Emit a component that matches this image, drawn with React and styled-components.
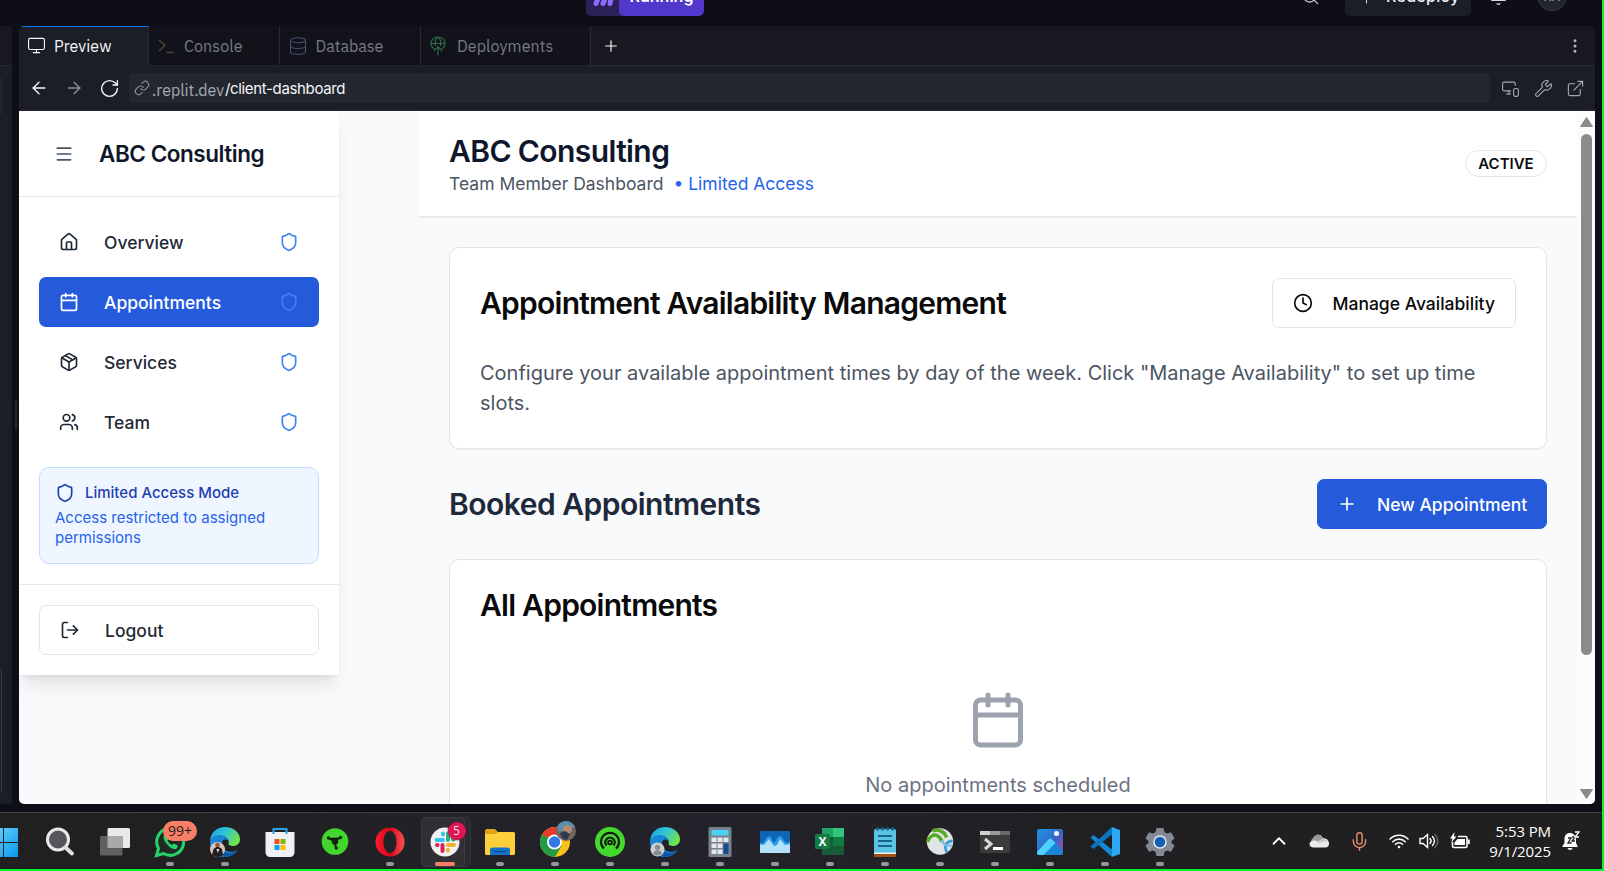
import React from "react";
import styled, { createGlobalStyle, css } from "styled-components";
import {
  Monitor, Database, Plus, EllipsisVertical, ArrowLeft, ArrowRight, RotateCw, MonitorSmartphone,
  Wrench, ExternalLink, Menu, House, Calendar, Package, Users, Shield, LogOut, Clock, Search, Bell,
  ChevronUp, Mic,
} from "lucide-react";

const GlobalStyle = createGlobalStyle`
  *, *::before, *::after { box-sizing: border-box; }
  body { margin: 0; background: #0e0e16; overflow: hidden; }
  h1, h2, h3, p { margin: 0; }
  button { font: inherit; margin: 0; }
  svg { display: block; flex: none; }
`;

const Screen = styled.div`
  width: 1604px;
  height: 871px;
  display: flex;
  flex-direction: column;
  overflow: hidden;
  background: #0e0e16;
  border-right: 2px solid #00f52e;
  border-bottom: 2px solid #00f52e;
  font-family: Inter, "Liberation Sans", sans-serif;
`;

/* ---------- workspace top bar ---------- */
const TopBar = styled.header`
  height: 26px;
  flex: none;
  overflow: hidden;
  display: flex;
  justify-content: space-between;
  padding: 0 35px 0 586px;
`;
const TopGroup = styled.div`
  display: flex;
  align-items: center;
  height: 32px;
  margin-top: -16px;
`;
const RunPill = styled.div`
  display: flex;
  height: 32px;
  border-radius: 5px;
  overflow: hidden;
  background: #2b2158;
`;
const RunMark = styled.div`
  width: 33px;
  display: flex;
  align-items: center;
  justify-content: center;
`;
const RunLabel = styled.div`
  width: 85px;
  background: #5137cb;
  border-radius: 5px;
  color: #fff;
  font: 600 16px/25px Inter, sans-serif;
  text-align: center;
`;
const Redeploy = styled.div`
  display: flex;
  gap: 10px;
  width: 126px;
  height: 32px;
  padding: 0 12px;
  margin: 0 18px 0 25px;
  border-radius: 5px;
  background: #1b1e26;
  color: #f2f3f5;
  font: 500 16px/25px Inter, sans-serif;
  letter-spacing: 0.3px;
  svg { margin-top: 4px; }
`;
const TopIcon = styled.span`
  margin-top: -8px;
  color: #d5d7dc;
`;
const Avatar = styled.div`
  width: 30px;
  height: 30px;
  margin: -8px 0 0 29px;
  border-radius: 50%;
  border: 1px solid #3b3f4b;
  background: #22252e;
  color: #8a8f9c;
  font: 500 12px/30px Inter, sans-serif;
  text-align: center;
`;

/* ---------- panes ---------- */
const Workspace = styled.div`
  display: flex;
  height: 778px;
  flex: none;
`;
const SidePane = styled.aside`
  width: 12px;
  display: flex;
  flex-direction: column;
  background: #1b1e26;
  border-radius: 0 4px 4px 0;
  overflow: hidden;
`;
const SidePaneTabs = styled.div`
  height: 40px;
  background: #181820;
  border-bottom: 1px solid #262932;
`;
const SidePaneChip = styled.div`
  width: 2px;
  height: 38px;
  margin-top: 11px;
  border-radius: 0 3px 3px 0;
  background: #23262e;
`;
const SidePaneBox = styled.div`
  width: 2px;
  height: 122px;
  margin-top: auto;
  margin-bottom: 13px;
  border: 1px solid #3a3e49;
  border-left: 0;
  border-radius: 0 3px 3px 0;
`;
const Gutter = styled.div`
  width: 7px;
  display: flex;
  align-items: center;
  justify-content: center;
`;
const GutterHandle = styled.div`
  width: 2px;
  height: 30px;
  background: #23252f;
`;
const Pane = styled.section`
  width: 1576px;
  display: flex;
  flex-direction: column;
  border-radius: 5px;
  overflow: hidden;
`;
const TabBar = styled.div`
  display: flex;
  height: 40px;
  flex: none;
  background: #181820;
`;
const Tab = styled.div`
  display: flex;
  align-items: center;
  gap: ${(p) => p.$gap || 8}px;
  width: ${(p) => p.$width}px;
  padding: 0 0 1px 8px;
  border-right: 1px solid #282b34;
  border-top: 1px solid ${(p) => (p.$active ? "#0079f2" : "transparent")};
  background: ${(p) => (p.$active ? "#1b1e26" : "#12121b")};
  border-bottom: 1px solid ${(p) => (p.$active ? "#1b1e26" : "#1f222b")};
  color: ${(p) => (p.$active ? "#f5f7fa" : "#777b84")};
  font: 400 16px/20px "IBM Plex Sans", Inter, sans-serif;
  letter-spacing: ${(p) => p.$ls || 0}px;
`;
const TabRest = styled.div`
  flex: 1;
  display: flex;
  align-items: center;
  justify-content: space-between;
  padding: 0 11px 0 11px;
  color: #f5f7fa;
  border-bottom: 1px solid #282b34;
`;
const AddressBar = styled.div`
  display: flex;
  align-items: center;
  height: 45px;
  flex: none;
  padding: 0 10px 0 10px;
  background: #1b1e26;
  border-bottom: 1px solid #2a2434;
  color: #a5a9b3;
`;
const NavIcons = styled.div`
  display: flex;
  gap: 15px;
  width: 100px;
  align-items: center;
`;
const UrlField = styled.div`
  width: 1361px;
  height: 30px;
  display: flex;
  align-items: center;
  padding-left: 5px;
  border-radius: 5px;
  background: #23262e;
  font-size: 16px;
`;
const UrlHost = styled.span`
  margin-left: 2px;
  padding-top: 3px;
  width: 73px;
  color: #a5a9b3;
  font-family: "IBM Plex Sans", Inter, sans-serif;
`;
const UrlPath = styled.span`
  color: #f5f7fa;
  font-size: 15px;
  letter-spacing: -0.35px;
`;
const ToolIcons = styled.div`
  display: flex;
  gap: 13.5px;
  margin-left: auto;
`;

/* ---------- previewed page ---------- */
const Viewport = styled.div`
  display: flex;
  flex: 1;
  min-height: 0;
  background: #f9fafc;
  overflow: hidden;
`;
const Sidebar = styled.nav`
  width: 320px;
  height: 564px;
  flex: none;
  display: flex;
  flex-direction: column;
  background: #fff;
  box-shadow: 0 12.5px 18.75px -3.75px rgba(0, 0, 0, 0.1), 0 5px 7.5px -5px rgba(0, 0, 0, 0.1);
`;
const SidebarHead = styled.div`
  display: flex;
  align-items: center;
  gap: 25px;
  height: 86px;
  padding-left: 35px;
  border-bottom: 1px solid #e5e7eb;
  color: #475569;
`;
const Brand = styled.h2`
  color: #0f172a;
  font-size: 22.5px;
  line-height: 30px;
  font-weight: 600;
  letter-spacing: -0.45px;
`;
const NavList = styled.div`
  display: flex;
  flex-direction: column;
  gap: 10px;
  padding: 20px;
`;
const NavItem = styled.a`
  display: flex;
  align-items: center;
  height: 50px;
  padding: 0 20px;
  border-radius: 7px;
  gap: 25px;
  font-size: 17.5px;
  font-weight: 500;
  color: #1f2937;
  ${(p) => p.$active && css`background: #255bdb; color: #fff;`}
`;
const Push = styled.span`
  margin-left: auto;
  color: #3b82f6;
`;
const Notice = styled.div`
  height: 97px;
  margin: 0 20px 20px;
  padding: 15px 15px 10px;
  border: 1px solid #bfdbfe;
  border-radius: 10px;
  background: #eff6ff;
  font-size: 15px;
  line-height: 20px;
  color: #2563eb;
`;
const NoticeTitle = styled.div`
  display: flex;
  align-items: center;
  gap: 10px;
  margin-bottom: 5px;
  font-weight: 500;
  color: #1e40af;
`;
const SidebarFoot = styled.div`
  padding: 20px;
  border-top: 1px solid #e5e7eb;
`;
const Logout = styled(NavItem)`
  border: 1px solid #e5e5e5;
`;
const Main = styled.main`
  flex: 1;
  margin-left: 80px;
  display: flex;
  flex-direction: column;
`;
const PageHead = styled.div`
  display: flex;
  align-items: center;
  justify-content: space-between;
  height: 106px;
  flex: none;
  padding: 1px 30px 0;
  background: #fff;
  border-bottom: 1px solid #e5e7eb;
  box-shadow: 0 1px 2px rgba(0, 0, 0, 0.05);
`;
const Heading = styled.h1`
  font-size: 30px;
  line-height: ${(p) => p.$lh || 30}px;
  font-weight: 600;
  color: ${(p) => p.$color || "#0a0a0a"};
  letter-spacing: ${(p) => p.$ls || 0}px;
`;
const SubLine = styled.p`
  display: flex;
  font-size: 17.5px;
  line-height: 27px;
  color: #4b5563;
`;
const Limited = styled.span`
  margin-left: 10px;
  color: #2563eb;
`;
const Status = styled.span`
  width: 82px;
  height: 27px;
  margin-top: -2px;
  border: 1px solid #e5e5e5;
  border-radius: 14px;
  text-align: center;
  font-size: 15px;
  line-height: 25px;
  font-weight: 600;
  color: #0a0a0a;
`;
const Content = styled.div`
  padding: 30px;
  display: flex;
  flex-direction: column;
  gap: 30px;
`;
const Card = styled.section`
  height: ${(p) => p.$height}px;
  flex: none;
  padding: 30px;
  border: 1px solid #e5e5e5;
  border-radius: 10px;
  background: #fff;
  box-shadow: 0 1px 2px rgba(0, 0, 0, 0.05);
`;
const Row = styled.div`
  display: flex;
  align-items: center;
  justify-content: space-between;
`;
const Button = styled.button`
  display: flex;
  align-items: center;
  gap: ${(p) => (p.$primary ? 20 : 19.5)}px;
  width: ${(p) => p.$width}px;
  height: 50px;
  padding: 0 ${(p) => (p.$primary ? 19 : 20)}px;
  border: 1px solid ${(p) => (p.$primary ? "#255bdb" : "#e5e5e5")};
  border-radius: 7px;
  background: ${(p) => (p.$primary ? "#255bdb" : "#fff")};
  color: ${(p) => (p.$primary ? "#fff" : "#0a0a0a")};
  font-size: 17.5px;
  font-weight: 500;
  white-space: nowrap;
`;
const Description = styled.p`
  margin-top: 30px;
  font-size: 20px;
  line-height: 30px;
  color: #4b5563;
`;
const Empty = styled.div`
  display: flex;
  flex-direction: column;
  align-items: center;
  gap: 20px;
  margin-top: 70px;
  font-size: 20px;
  line-height: 30px;
  color: #6b7280;
  svg { color: #9ca3af; }
`;
const ScrollTrack = styled.div`
  width: 18px;
  flex: none;
  display: flex;
  flex-direction: column;
  align-items: center;
  justify-content: space-between;
  padding: 6px 0 5px 1px;
  background: #fcfcfc;
  color: #8b8b8b;
`;
const ScrollThumb = styled.div`
  width: 11px;
  height: 521px;
  margin: 7px 0 auto;
  border-radius: 6px;
  background: #8b8b8b;
`;

/* ---------- desktop taskbar ---------- */
const Taskbar = styled.footer`
  display: flex;
  height: 57px;
  margin-top: 8px;
  flex: none;
  border-top: 1px solid #404043;
  background: linear-gradient(90deg, #202021 0%, #212125 18%, #23222a 45%, #202022 70%, #202020 100%);
`;
const Slot = styled.div`
  position: relative;
  width: ${(p) => p.$width || 55}px;
  flex: none;
  display: flex;
  justify-content: center;
  padding-top: 14px;
`;
const ActiveTile = styled.div`
  position: absolute;
  left: 3px;
  top: 4px;
  width: 50px;
  height: 50px;
  border: 1px solid #34343a;
  border-radius: 5px;
  background: #29292e;
  &::after {
    content: "";
    position: absolute;
    inset: -1px 5px -1px -1px;
    border: 1px solid #3b3b41;
    border-radius: 5px;
    background: #2f2f34;
  }
`;
const Indicator = styled.div`
  position: absolute;
  bottom: 3px;
  left: 50%;
  width: ${(p) => (p.$active ? 20 : 8)}px;
  height: 4px;
  transform: translateX(-50%);
  border-radius: 2px;
  background: ${(p) => (p.$active ? "#f87f66" : "#98979b")};
`;
const AppIcon = styled.svg.attrs({ viewBox: "0 0 30 30", width: 30, height: 30 })`
  position: relative;
  overflow: visible;
`;
const CountBadge = styled.span`
  position: absolute;
  left: 20.5px;
  top: 8px;
  width: 34px;
  height: 20px;
  border-radius: 10px;
  background: #f87f66;
  color: #1c1c1c;
  font: 400 14px/20px "Open Sans", sans-serif;
  text-align: center;
`;
const DotBadge = styled.span`
  position: absolute;
  left: 30px;
  top: 9px;
  width: 18px;
  height: 18px;
  border-radius: 50%;
  background: #dc1651;
  box-shadow: 0 0 2px #5a0a22;
  color: #ffdbe6;
  font: 400 12px/18px "Open Sans", sans-serif;
  text-align: center;
`;
const Tray = styled.div`
  display: flex;
  align-items: center;
  margin-left: auto;
  padding-right: 19px;
  color: #fff;
`;
const TrayIcon = styled.div`
  width: ${(p) => p.$width}px;
  display: flex;
  justify-content: center;
  color: ${(p) => p.$color || "#fff"};
`;
const ClockText = styled.div`
  width: 72px;
  margin-right: 8px;
  text-align: right;
  font: 400 15px/20px "Open Sans", "Noto Sans", sans-serif;
  letter-spacing: -0.1px;
  white-space: nowrap;
`;

const ConsoleIcon = () => (
  <svg width="18" height="18" viewBox="0 0 18 18" fill="none" stroke="#4c4631" strokeWidth="1.4">
    <path d="M2 3l6 5.500-6 5.500M9.500 15.500h7.500" />
  </svg>
);
const DeployIcon = () => (
  <svg width="18" height="20" viewBox="0 0 18 20" fill="none" stroke="#2f6a40" strokeWidth="1.2">
    <path d="M5.500 13C3.200 11.700 2 9.800 2 7.500 2 3.800 5 1 9 1s7 2.800 7 6.500c0 2.300-1.200 4.200-3.500 5.500M2 7.500h14M6.500 10C5.800 7 6.500 3 9 1c2.500 2 3.200 6 2.500 9M9 19.500V10.500M4.800 15L9 10.800l4.200 4.200" />
  </svg>
);
const RunIcon = () => (
  <svg width="22" height="20" viewBox="0 0 22 20" fill="none" stroke="#8f6bff" strokeWidth="5" strokeLinecap="round">
    <path d="M4 13.500l2-5M11 13.500l2-5M18 13.500l1-5" />
  </svg>
);

const EdgeArt = ({ id }) => (
  <>
    <defs>
      <linearGradient id={id} x1="0" y1="0" x2="1" y2="0.5">
        <stop offset="0" stopColor="#1f9fe0" /><stop offset="0.5" stopColor="#2fc3d6" /><stop offset="1" stopColor="#6ee34c" />
      </linearGradient>
    </defs>
    <path d="M0 14C1 5 7 0 15 0c9 0 15 6 15 12.500 0 4-3 6.500-7 6.500-3 0-5-1-4.500-2.200C20 14 17 9 11 9 6 9 2 11 0 14z" fill={`url(#${id})`} />
    <path d="M0 15C1 10.500 5 8 10 8c5 0 8.500 3 9 6.500-2-2.500-5-2.500-6.500-.5-1.500 3-.5 7 3 9.500 3.500 2 8 1.500 12-.5C25 27.500 20 30 15 30 6.500 30 0 23.500 0 15z" fill="#1a86d6" />
    <path d="M10 12.500c-2.500 5.500 1 12.500 8 13.500 4 .3 7-1 9.500-3.500C24.500 27.500 20.500 30 15 30c-4.500-1.500-8-5.500-7.500-11 .3-3 1-5 2.500-6.500z" fill="#0c56a4" />
  </>
);

const apps = [
  { key: "search", art: (
    <><circle cx="13" cy="12.500" r="10.500" fill="#55565a" stroke="#e8e9eb" strokeWidth="3" /><path d="M20.500 20.500l6.500 6" stroke="#dcdde0" strokeWidth="4" strokeLinecap="round" /></>
  ) },
  { key: "tasks", art: (
    <><rect x="7.500" y="1" width="22.500" height="20" rx="1.500" fill="#e9e9ea" /><rect x="0" y="9" width="22.500" height="19.500" rx="1.500" fill="#606062" /><path d="M7.500 9h15v12h-15z" fill="#a9a9ab" /></>
  ) },
  { key: "whatsapp", dot: true, badge: "99+", art: (
    <><path d="M1.500 28.500l2-7A13.500 13.500 0 1 1 8.500 26.500z" fill="#1f2b26" stroke="#25d366" strokeWidth="3" /><path d="M10 8c-2 1-2 4 1 8s7 7 10 6c2-1 2-3 1-4l-3-1.500-2 1.500c-2-.7-4-3-4.500-4.500L14 12l-1.500-3.500z" fill="#25d366" /></>
  ) },
  { key: "edge", dot: true, art: (
    <><EdgeArt id="edgeA" /><circle cx="7.500" cy="22.500" r="7.500" fill="#d9c5b8" /><path d="M2 28l1.500-6 4-3 4.500 3 1 6c-3 2.500-8 2.500-11 0z" fill="#211f24" /><path d="M6.500 22l1.500 4 1-4z" fill="#fff" /><circle cx="7.500" cy="18" r="2.300" fill="#8b5a44" /></>
  ) },
  { key: "store", art: (
    <><path d="M8.500 7V2h13V7" fill="none" stroke="#2ba3e6" strokeWidth="2" /><path d="M.5 5h29v20c0 3-2 5-5 5h-19c-3 0-5-2-5-5z" fill="#f0f0f2" /><path d="M8.500 7V4.500M21.500 7V4.500" stroke="#2ba3e6" strokeWidth="2" /><path d="M9.500 12h5v5h-5z" fill="#f25022" /><path d="M15.500 12h5v5h-5z" fill="#7fba00" /><path d="M9.500 18h5v5h-5z" fill="#00a4ef" /><path d="M15.500 18h5v5h-5z" fill="#ffb900" /></>
  ) },
  { key: "node", art: (
    <><circle cx="15" cy="14.500" r="13.300" fill="#42d62c" /><path d="M8.500 11l6 3.500 6-4M14.500 14.500l1.500 6.500" stroke="#14240f" strokeWidth="2" /><circle cx="15" cy="14.500" r="3.200" fill="#14240f" /><circle cx="8.500" cy="11" r="1.700" fill="#14240f" /><circle cx="20.500" cy="10.500" r="1.700" fill="#14240f" /><circle cx="16.300" cy="21" r="1.700" fill="#14240f" /></>
  ) },
  { key: "opera", dot: true, art: (
    <><defs><linearGradient id="op"><stop offset="0" stopColor="#ff1b2d" /><stop offset="0.5" stopColor="#d1061c" /><stop offset="1" stopColor="#ff5252" /></linearGradient></defs><path fillRule="evenodd" d="M15 .5a14.500 14.500 0 1 1 0 29 14.500 14.500 0 0 1 0-29zM15 4c-4 0-6.500 5-6.500 11S11 26 15 26s6.500-5 6.500-11S19 4 15 4z" fill="url(#op)" /></>
  ) },
  { key: "slack", active: true, count: "5", art: (
    <><circle cx="15" cy="15" r="14.500" fill="#f4f1f2" /><g strokeWidth="4" strokeLinecap="round" fill="none"><path d="M6.500 13h6.500M13 6.500v1" stroke="#36c5f0" /><path d="M18 6.500V13M23 12.500h.5" stroke="#2eb67d" /><path d="M18 18h6M18 23v.5" stroke="#ecb22e" /><path d="M12.500 18v6M7 18h.5" stroke="#e01e5a" /></g></>
  ) },
  { key: "files", dot: true, art: (
    <><path d="M0 4c0-1.200.8-2 2-2h8l3 3h15c1.200 0 2 .8 2 2v4H0z" fill="#e3a011" /><path d="M0 7h11l2-2h15c1.200 0 2 .8 2 2v19.500c0 .8-.7 1.500-1.500 1.500H1.500C.7 28 0 27.300 0 26.500z" fill="#fdd03b" /><path d="M5 28v-5c0-1.700 1-2.500 2.500-2.500h15c1.500 0 2.500.8 2.500 2.500v5z" fill="#1273c9" /><path d="M8.500 24.500h13" stroke="#0a4b8c" strokeWidth="1.300" /></>
  ) },
  { key: "chrome", dot: true, art: (
    <><circle cx="15" cy="15" r="15" fill="#fbc116" /><path d="M15 15L2 7.500A15 15 0 0 1 28 7.500z" fill="#e33b2e" /><path d="M2 7.500a15 15 0 0 0 13 22.500l7-12z" fill="#259a46" /><circle cx="14.500" cy="15" r="7.500" fill="#fff" /><circle cx="14.500" cy="15" r="5.700" fill="#3078e8" /><circle cx="26" cy="4" r="10" fill="#75675e" /><path d="M17 0c4-8 15-7 18 0l-3 1c-4-2-9 1-12 5z" fill="#5791ab" /><circle cx="27.500" cy="2.500" r="4.500" fill="#b68970" /><path d="M20 6l5-2 5 3-3 6c-3 0-6-2-7-7z" fill="#2e3a50" /></>
  ) },
  { key: "booster", dot: true, art: (
    <><circle cx="15" cy="15" r="15" fill="#44d92c" /><path d="M9 21.500A9 9 0 1 1 21 21.500M11.500 18.500A4.700 4.700 0 1 1 18.500 18.500" fill="none" stroke="#0f1b0c" strokeWidth="2.200" /><circle cx="15" cy="15.500" r="2.800" fill="#0f1b0c" /><circle cx="15" cy="15.500" r="1" fill="#44d92c" /></>
  ) },
  { key: "edge2", dot: true, art: (
    <><EdgeArt id="edgeB" /><circle cx="7.500" cy="22.500" r="7" fill="#cfcfd0" /><circle cx="7.500" cy="20.500" r="2.700" fill="#8b8b8c" /><path d="M3 27c0-5 9-5 9 0-3 2-6 2-9 0z" fill="#8b8b8c" /></>
  ) },
  { key: "calc", dot: true, art: (
    <><rect x="3.500" y="0" width="23" height="30" rx="1.500" fill="#78828c" /><path d="M6.500 3h17v5.500h-17z" fill="#49d1f6" /><g fill="#e2e7ec"><path d="M6.500 10.500h5v4.500h-5zM12.500 10.500h5v4.500h-5zM18.500 10.500h5v4.500h-5zM6.500 16.500h5v4.500h-5zM12.500 16.500h5v4.500h-5zM6.500 22.500h5v4.500h-5zM12.500 22.500h5v4.500h-5z" /></g><path d="M18.500 16.500h5V27h-5z" fill="#154a8c" /></>
  ) },
  { key: "monitor", dot: true, art: (
    <><rect x="0" y="4" width="30" height="22" rx="1.200" fill="#0e64b5" /><path d="M0 16h3l4-6 3-1 4 7 4-6 3-1 4 6 2 1 3-2v11H0z" fill="#2a9ce8" /><path d="M0 17.500l4 .5 5-6 5 7 3-1 3-6 5 6 5-1v8c0 .6-.4 1-1 1H1c-.6 0-1-.4-1-1z" fill="#b5e2fb" /></>
  ) },
  { key: "excel", dot: true, art: (
    <><rect x="7" y="1" width="22" height="27" rx="1.500" fill="#185c37" /><path d="M7 1h11v9H7z" fill="#21a366" /><path d="M18 1h11v9H18z" fill="#33c481" /><path d="M18 10h11v9H18z" fill="#107c41" /><rect x="0" y="7" width="15" height="15" rx="1.500" fill="#107c41" /><text x="7.500" y="18.800" textAnchor="middle" fontFamily="Open Sans, sans-serif" fontWeight="700" fontSize="12" fill="#fff">X</text></>
  ) },
  { key: "notepad", dot: true, art: (
    <><rect x="4" y="2" width="22" height="28" rx="1.500" fill="#5bc4e3" /><path d="M4 27h22v1.500c0 .8-.7 1.500-1.500 1.500h-19c-.8 0-1.500-.7-1.500-1.500z" fill="#a0520f" /><path d="M4 25.500h22V27H4z" fill="#f0eee8" /><path d="M8 9h14M8 14h14M8 19h14" stroke="#14678a" strokeWidth="1.800" /><g fill="#14678a"><circle cx="7.500" cy="2" r="1.700" /><circle cx="12.500" cy="2" r="1.700" /><circle cx="17.500" cy="2" r="1.700" /><circle cx="22.500" cy="2" r="1.700" /></g></>
  ) },
  { key: "anyconnect", dot: true, art: (
    <><circle cx="15" cy="14.500" r="13.200" fill="#dfe4e4" /><path d="M2.500 15C4 9.500 8.500 7 12 8.500c3 1.500 4 3.500 5 6M7.500 4c5-2.500 12 0 14 6.500" fill="none" stroke="#57aa21" strokeWidth="3.500" /><path d="M27.500 14c-4 0-7 2.500-7 6 0 2 .5 4 1.500 5.500" fill="none" stroke="#3b9ad8" strokeWidth="3" /><path d="M17 13c1 4.500 5 6.500 10 5.500" fill="none" stroke="#7fbce4" strokeWidth="2.500" /></>
  ) },
  { key: "terminal", dot: true, art: (
    <><rect x="0" y="4" width="30" height="22" rx="1" fill="#3b3b3c" /><path d="M0 4h10v4H0z" fill="#cfcfcf" /><path d="M10 4h10v4H10z" fill="#999" /><path d="M20 4h10v4H20z" fill="#6b6b6b" /><path d="M5 12l6 5-6 5" fill="none" stroke="#d8d8d8" strokeWidth="3" /><path d="M13 21.500h10" stroke="#fff" strokeWidth="3" /></>
  ) },
  { key: "photos", dot: true, art: (
    <><defs><linearGradient id="ph" x1="0" y1="0" x2="1" y2="1"><stop offset="0" stopColor="#1796e4" /><stop offset="0.55" stopColor="#3a66c4" /><stop offset="1" stopColor="#a44ba4" /></linearGradient></defs><rect x="2" y="2" width="26" height="26" rx="2.500" fill="url(#ph)" /><path d="M2 26L14 12c1-1 2-1 3 0l11 12v2c0 1-1 2-2 2H4c-1 0-2-1-2-2z" fill="#1b83d8" /><path d="M2 25l11.500-12.500c1.200-1.200 2.300-1.200 3.500 0l3.500 3.500-12 12H4c-1.200 0-2-1-2-3z" fill="#4fd2fa" /><circle cx="21.500" cy="6.500" r="2.500" fill="#f4f8ff" /></>
  ) },
  { key: "code", dot: true, art: (
    <><path d="M.5 10.500l3-2.500L22 22.500V30z" fill="#1389d6" /><path d="M.5 19.500l3 2.500L22 7.500V0z" fill="#0b74c0" /><path d="M22 0l8 3v24l-8 3z" fill="#2ba7f3" /></>
  ) },
  { key: "settings", dot: true, art: (
    <><path d="M11.500 1h7l1 4 2.500 1.500 4-1.200 3.500 6-3 3v1.500l3 3-3.500 6-4-1.200L19.500 25l-1 4h-7l-1-4L8 23.600l-4 1.200-3.500-6 3-3v-1.500l-3-3L4 5.300l4 1.200L10.500 5z" fill="#828992" /><circle cx="15" cy="15" r="6.800" fill="#e5ebf0" /><circle cx="15" cy="15" r="5.300" fill="#0f5fb4" /></>
  ) },
];

const navItems = [
  { label: "Overview", icon: House },
  { label: "Appointments", icon: Calendar, active: true },
  { label: "Services", icon: Package },
  { label: "Team", icon: Users },
];

function WorkspaceTop() {
  return (
    <TopBar>
      <TopGroup>
        <RunPill>
          <RunMark><RunIcon /></RunMark>
          <RunLabel>Running</RunLabel>
        </RunPill>
      </TopGroup>
      <TopGroup>
        <TopIcon><Search size={19} strokeWidth={1.5} /></TopIcon>
        <Redeploy><Plus size={19} strokeWidth={1.4} color="#c9ccd2" />Redeploy</Redeploy>
        <TopIcon><Bell size={19} strokeWidth={1.5} /></TopIcon>
        <Avatar>KA</Avatar>
      </TopGroup>
    </TopBar>
  );
}

function BrowserChrome() {
  return (
    <>
      <TabBar>
        <Tab $active $width={130} $gap={8} $ls={0.1}><Monitor size={19} strokeWidth={1.4} />Preview</Tab>
        <Tab $width={131} $gap={9} $ls={0.1}><ConsoleIcon />Console</Tab>
        <Tab $width={141} $gap={7.5}><Database size={20} strokeWidth={1.3} color="#41526a" />Database</Tab>
        <Tab $width={170} $gap={10} $ls={0.1}><DeployIcon />Deployments</Tab>
        <TabRest>
          <Plus size={18} strokeWidth={1.6} />
          <EllipsisVertical size={18} color="#b4b7bf" />
        </TabRest>
      </TabBar>
      <AddressBar>
        <NavIcons>
          <ArrowLeft size={20} strokeWidth={1.6} color="#f5f7fa" />
          <ArrowRight size={20} strokeWidth={1.6} color="#8b8f99" />
          <RotateCw size={21} strokeWidth={1.6} color="#f5f7fa" />
        </NavIcons>
        <UrlField>
          <svg width="16" height="16" viewBox="0 0 24 24" fill="none" stroke="#8b8f99" strokeWidth="1.7" strokeLinecap="round">
            <path d="M10 13a5 5 0 0 0 7.540.54l3-3a5 5 0 0 0-7.070-7.070l-1.720 1.710" /><path d="M14 11a5 5 0 0 0-7.540-.54l-3 3a5 5 0 0 0 7.070 7.070l1.710-1.710" />
          </svg>
          <UrlHost>.replit.dev</UrlHost><UrlPath>/client-dashboard</UrlPath>
        </UrlField>
        <ToolIcons>
          <MonitorSmartphone size={19} strokeWidth={1.4} />
          <Wrench size={19} strokeWidth={1.4} />
          <ExternalLink size={19} strokeWidth={1.4} />
        </ToolIcons>
      </AddressBar>
    </>
  );
}

function PageSidebar() {
  return (
    <Sidebar>
      <SidebarHead><Menu size={20} /><Brand>ABC Consulting</Brand></SidebarHead>
      <NavList>
        {navItems.map(({ label, icon: Icon, active }) => (
          <NavItem key={label} $active={active}>
            <Icon size={20} />{label}<Push><Shield size={20} /></Push>
          </NavItem>
        ))}
      </NavList>
      <Notice>
        <NoticeTitle><Shield size={20} />Limited Access Mode</NoticeTitle>
        Access restricted to assigned permissions
      </Notice>
      <SidebarFoot><Logout><LogOut size={20} />Logout</Logout></SidebarFoot>
    </Sidebar>
  );
}

function Page() {
  return (
    <Viewport>
      <PageSidebar />
      <Main>
        <PageHead>
          <div>
            <Heading $lh={38} $color="#0f172a" $ls={-0.6}>ABC Consulting</Heading>
            <SubLine>Team Member Dashboard<Limited>• Limited Access</Limited></SubLine>
          </div>
          <Status>ACTIVE</Status>
        </PageHead>
        <Content>
          <Card $height={202}>
            <Row>
              <Heading $ls={-0.75}>Appointment Availability Management</Heading>
              <Button $width={244}><Clock size={20} />Manage Availability</Button>
            </Row>
            <Description>
              Configure your available appointment times by day of the week. Click "Manage Availability" to set up time slots.
            </Description>
          </Card>
          <Row>
            <Heading $color="#1e293b" $ls={-0.5}>Booked Appointments</Heading>
            <Button $primary $width={230}><Plus size={20} />New Appointment</Button>
          </Row>
          <Card $height={300}>
            <Heading $ls={-0.75}>All Appointments</Heading>
            <Empty><Calendar size={60} />No appointments scheduled</Empty>
          </Card>
        </Content>
      </Main>
      <ScrollTrack>
        <svg width="13" height="10" viewBox="0 0 13 10"><path d="M6.500 0.500L12.500 9.500H.5z" fill="currentColor" stroke="currentColor" strokeLinejoin="round" /></svg>
        <ScrollThumb />
        <svg width="13" height="10" viewBox="0 0 13 10"><path d="M6.500 9.500L12.500.5H.5z" fill="currentColor" stroke="currentColor" strokeLinejoin="round" /></svg>
      </ScrollTrack>
    </Viewport>
  );
}

function DesktopBar() {
  return (
    <Taskbar>
      <Slot $width={32.5}>
        <AppIcon>
          <defs><linearGradient id="win" x1="0" y1="0" x2="1" y2="1"><stop offset="0" stopColor="#6fdcfb" /><stop offset="1" stopColor="#0a96f0" /></linearGradient></defs>
          <path d="M-12.500 1h14.500v14h-14.500zM3 1h14v14H3zM-12.500 16h14.500v14h-14.500zM3 16h14v14H3z" fill="url(#win)" />
        </AppIcon>
      </Slot>
      {apps.map((a) => (
        <Slot key={a.key}>
          {a.active && <ActiveTile />}
          <AppIcon>{a.art}</AppIcon>
          {a.badge && <CountBadge>{a.badge}</CountBadge>}
          {a.count && <DotBadge>{a.count}</DotBadge>}
          {(a.dot || a.active) && <Indicator $active={a.active} />}
        </Slot>
      ))}
      <Tray>
        <TrayIcon $width={40}><ChevronUp size={22} strokeWidth={2} /></TrayIcon>
        <TrayIcon $width={40}>
          <svg width="20" height="14" viewBox="0 0 20 14"><path d="M3 10a4 4 0 0 1 1-6C6 0 12-1 14 4c4 0 6 3 5.500 6z" fill="#9b9b9b" /><path d="M4.500 13.500C0 13.500-1 8 3 7c2-.8 4-.3 5.500.8L14 4.500c5 0 6 3 6 5.500 0 2-1.500 3.500-3.500 3.500z" fill="#e9e9e9" /><path d="M8.500 8L14 4.500c2 .3 4 1 5 2.500-3 0-6 1-8 2.500z" fill="#c9c9c9" /></svg>
        </TrayIcon>
        <TrayIcon $width={40} $color="#e78a6c"><Mic size={21} strokeWidth={1.6} /></TrayIcon>
        <TrayIcon $width={40}>
          <svg width="20" height="16" viewBox="0 0 20 16" fill="none" stroke="#fff" strokeWidth="1.6" strokeLinecap="round"><path d="M1 6a12.700 12.700 0 0 1 18 0M3.800 8.700a8.800 8.800 0 0 1 12.400 0M6.500 11.300a5 5 0 0 1 7 0" /><circle cx="10" cy="14" r="1.300" fill="#fff" stroke="none" /></svg>
        </TrayIcon>
        <TrayIcon $width={21}>
          <svg width="21" height="18" viewBox="0 0 21 18" fill="none" stroke="#fff" strokeWidth="1.4" strokeLinecap="round"><path d="M1 6.500h3L8.500 2.500v13L4 11.500H1zM11 6.500c1.300 1.500 1.300 3.500 0 5M13.500 4.500c2.500 2.800 2.500 6.200 0 9" /><path d="M16 2.500c3.500 4 3.500 9 0 13" stroke="#666" /></svg>
        </TrayIcon>
        <TrayIcon $width={39}>
          <svg width="20" height="18" viewBox="0 0 20 18"><path d="M8 4.500h7.500c1 0 1.500.6 1.500 1.500v8c0 1-.5 1.500-1.500 1.500H4c-1 0-1.500-.5-1.500-1.500v-4" fill="none" stroke="#fff" strokeWidth="1.600" /><path d="M7.500 7H15v6H4.500v-2.500zM18 7.500h1.800v4.500H18zM4.500 0L0 6.500h2.500L1 11l5.500-6.500H4z" fill="#fff" /></svg>
        </TrayIcon>
        <ClockText>5:53 PM<br />9/1/2025</ClockText>
        <TrayIcon $width={24}>
          <svg width="18" height="20" viewBox="0 0 18 20"><path d="M8 2C4.500 2 2.500 4.500 2.500 8v4L.5 15v1h15v-1l-1.500-3V9C14 4 11 2 8 2zM5.500 17h5c-.5 2.500-4.500 2.500-5 0z" fill="#fff" /><path d="M6 7h3l-3 5h3.500M10 6h3l-3 4h3" fill="none" stroke="#202020" strokeWidth="1.3" /><path d="M13 1h4l-4 5h4" fill="none" stroke="#fff" strokeWidth="1.3" /></svg>
        </TrayIcon>
      </Tray>
    </Taskbar>
  );
}

export default function App() {
  return (
    <Screen>
      <GlobalStyle />
      <WorkspaceTop />
      <Workspace>
        <SidePane><SidePaneTabs /><SidePaneChip /><SidePaneBox /></SidePane>
        <Gutter><GutterHandle /></Gutter>
        <Pane>
          <BrowserChrome />
          <Page />
        </Pane>
      </Workspace>
      <DesktopBar />
    </Screen>
  );
}
